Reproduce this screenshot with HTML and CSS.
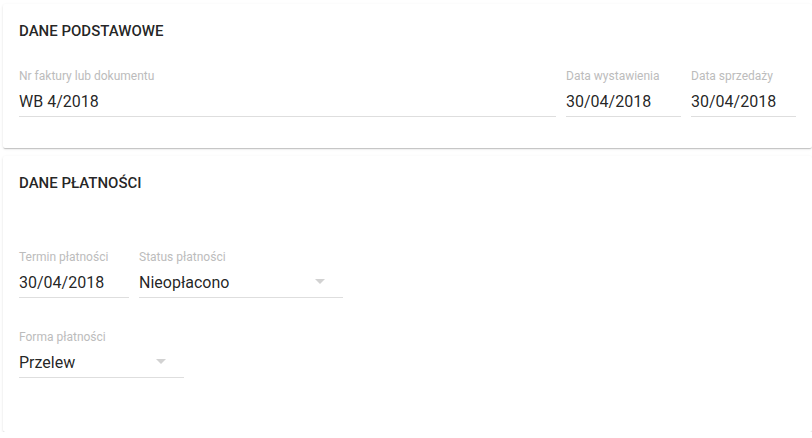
FILE: index.html
```html
<!DOCTYPE html>
<html lang="pl">
<head>
<meta charset="utf-8">
<title>Dane dokumentu</title>
<link rel="stylesheet" href="styles.css">
</head>
<body>
<div class="page">
  <section class="card card-basic">
    <h2 class="card-title">DANE PODSTAWOWE</h2>
    <div class="row">
      <div class="field field-grow">
        <div class="label">Nr faktury lub dokumentu</div>
        <div class="value">WB 4/2018</div>
      </div>
      <div class="field field-issue">
        <div class="label">Data wystawienia</div>
        <div class="value">30/04/2018</div>
      </div>
      <div class="field field-sale">
        <div class="label">Data sprzedaży</div>
        <div class="value">30/04/2018</div>
      </div>
    </div>
  </section>

  <section class="card card-pay">
    <h2 class="card-title">DANE PŁATNOŚCI</h2>
    <div class="row row-pay">
      <div class="field field-term">
        <div class="label">Termin płatności</div>
        <div class="value">30/04/2018</div>
      </div>
      <div class="field field-status">
        <div class="label">Status płatności</div>
        <div class="value select">
          <span>Nieopłacono</span>
          <span class="arrow"></span>
        </div>
      </div>
    </div>
    <div class="row row-form">
      <div class="field field-form">
        <div class="label">Forma płatności</div>
        <div class="value select">
          <span>Przelew</span>
          <span class="arrow"></span>
        </div>
      </div>
    </div>
  </section>
</div>
</body>
</html>
```

FILE: styles.css
```css
html, body {
  margin: 0;
  padding: 0;
  background: #ffffff;
}

body {
  font-family: Roboto, "Noto Sans", "Liberation Sans", sans-serif;
  color: rgba(0, 0, 0, 0.87);
}

.page {
  padding: 4px 0 0 3px;
  display: flex;
  flex-direction: column;
  gap: 8px;
}

.card {
  background: #fff;
  box-shadow: 0 2px 1px -1px rgba(0, 0, 0, 0.12), 0 1px 1px 0 rgba(0, 0, 0, 0.08), 0 1px 3px 0 rgba(0, 0, 0, 0.1);
  border-radius: 2px;
  padding: 17px 16px 0 16px;
  box-sizing: border-box;
  width: 809px;
}

.card-basic {
  height: 144px;
}

.card-pay {
  height: 276px;
}

.card-title {
  margin: 0;
  font-size: 15px;
  line-height: 20px;
  font-weight: 500;
  color: rgba(0, 0, 0, 0.87);
}

.row {
  display: flex;
  gap: 10px;
}

.card-basic .row {
  margin-top: 28px;
}

.row-pay {
  margin-top: 57px;
}

.row-form {
  margin-top: 32px;
}

.field {
  border-bottom: 1px solid #dedede;
  padding-bottom: 4px;
}

.field-grow { flex: 1; }
.field-issue { width: 115px; }
.field-sale { width: 105px; }
.field-term { width: 110px; }
.field-status { width: 204px; }
.field-form { width: 165px; }

.label {
  font-size: 12px;
  line-height: 14px;
  color: #bcbcbc;
  white-space: nowrap;
}

.value {
  margin-top: 9px;
  font-size: 16px;
  line-height: 20px;
  color: rgba(0, 0, 0, 0.87);
  white-space: nowrap;
}

.select {
  display: flex;
  align-items: center;
  justify-content: space-between;
}

.arrow {
  width: 0;
  height: 0;
  border-left: 5px solid transparent;
  border-right: 5px solid transparent;
  border-top: 5px solid #d2d2d2;
  margin-right: 18px;
  margin-top: -3px;
}
```
